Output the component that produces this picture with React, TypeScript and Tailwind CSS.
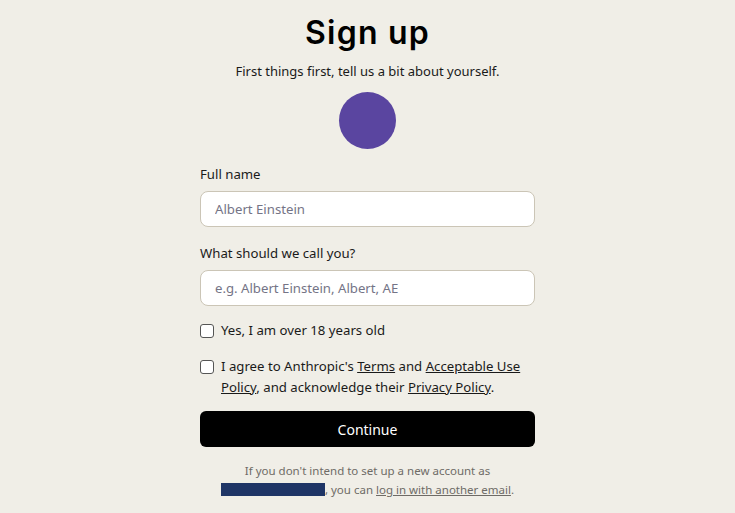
import React from 'react';

const App: React.FC = () => {
  return (
    <div
      className="min-h-[513px] w-full bg-[#f0eee7] text-[#1a1a1a] flex flex-col items-center"
      style={{ fontFamily: '"Noto Sans", "Open Sans", sans-serif' }}
    >
      <h1
        className="mt-[13px] text-[32px] font-semibold leading-[40px] tracking-[1.2px] text-black"
        style={{ fontFamily: 'Inter, "Noto Sans", sans-serif' }}
      >
        Sign up
      </h1>
      <p className="mt-[9px] text-[13px] leading-[18px]">First things first, tell us a bit about yourself.</p>
      <div className="mt-[12px] h-[57px] w-[57px] rounded-full bg-[#5a45a0]" />

      <div className="mt-[16px] w-[335px] flex flex-col">
        <label className="text-[13.2px] leading-[18px]">Full name</label>
        <input
          type="text"
          placeholder="Albert Einstein"
          className="mt-[8px] h-[36px] w-full rounded-lg border border-[#cbc5b6] bg-white px-[14px] text-[13.2px] placeholder:text-[#747486] outline-none"
        />
        <label className="mt-[17px] text-[13.2px] leading-[18px]">What should we call you?</label>
        <input
          type="text"
          placeholder="e.g. Albert Einstein, Albert, AE"
          className="mt-[8px] h-[36px] w-full rounded-lg border border-[#cbc5b6] bg-white px-[14px] text-[13.2px] placeholder:text-[#747486] outline-none"
        />

        <div className="mt-[14px] flex items-center gap-[7px]">
          <span className="h-[14px] w-[14px] rounded-[3px] border border-[#555] bg-white" />
          <span className="text-[13.2px] leading-[21px]">Yes, I am over 18 years old</span>
        </div>

        <div className="mt-[15px] flex items-start gap-[7px]">
          <span className="mt-[4px] h-[14px] w-[14px] shrink-0 rounded-[3px] border border-[#555] bg-white" />
          <p className="text-[13.2px] leading-[21px]">
            I agree to Anthropic's <span className="underline">Terms</span> and{' '}
            <span className="underline">Acceptable Use Policy</span>, and acknowledge their{' '}
            <span className="underline">Privacy Policy</span>.
          </p>
        </div>

        <button className="mt-[13px] h-[36px] w-full rounded-md bg-black text-[14px] text-white">Continue</button>

        <p className="mt-[14px] text-center text-[11.5px] leading-[19px] text-[#6e6b66]">
          If you don't intend to set up a new account as
          <br />
          <span className="inline-block h-[13px] w-[104px] align-[-2px] bg-[#1f3566]" />, you can{' '}
          <span className="underline">log in with another email</span>.
        </p>
      </div>
    </div>
  );
};

export default App;
